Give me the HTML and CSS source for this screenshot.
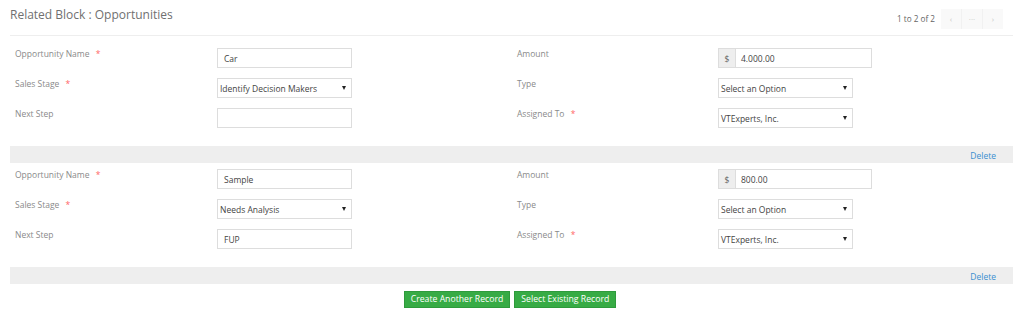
FILE: index.html
```html
<!DOCTYPE html>
<html lang="en">
<head>
    <meta charset="UTF-8">
    <title>Related Block : Opportunities</title>
    <link rel="stylesheet" href="styles.css">
</head>
<body>

    <div class="block">
        <div class="block-header">
            <h3 class="block-title">Related Block : Opportunities</h3>
            <div class="pager">
                <span class="pager-count">1 to 2 of 2</span>
                <div class="pager-btns">
                    <span class="pager-btn">&lsaquo;</span>
                    <span class="pager-btn">&middot;&middot;&middot;</span>
                    <span class="pager-btn">&rsaquo;</span>
                </div>
            </div>
        </div>

        <!-- record 1 -->
        <div class="fields first">
            <div class="label">Opportunity Name <span class="req">*</span></div>
            <div class="field"><div class="input">Car</div></div>
            <div class="label">Amount</div>
            <div class="field">
                <div class="input-group">
                    <span class="addon">$</span>
                    <span class="input-value">4.000.00</span>
                </div>
            </div>

            <div class="label">Sales Stage <span class="req">*</span></div>
            <div class="field"><div class="select"><span>Identify Decision Makers</span><span class="caret"></span></div></div>
            <div class="label">Type</div>
            <div class="field"><div class="select"><span>Select an Option</span><span class="caret"></span></div></div>

            <div class="label">Next Step</div>
            <div class="field"><div class="input"></div></div>
            <div class="label">Assigned To <span class="req">*</span></div>
            <div class="field"><div class="select"><span>VTExperts, Inc.</span><span class="caret"></span></div></div>
        </div>
        <div class="record-bar"><a href="#" class="delete">Delete</a></div>

        <!-- record 2 -->
        <div class="fields">
            <div class="label">Opportunity Name <span class="req">*</span></div>
            <div class="field"><div class="input">Sample</div></div>
            <div class="label">Amount</div>
            <div class="field">
                <div class="input-group">
                    <span class="addon">$</span>
                    <span class="input-value">800.00</span>
                </div>
            </div>

            <div class="label">Sales Stage <span class="req">*</span></div>
            <div class="field"><div class="select"><span>Needs Analysis</span><span class="caret"></span></div></div>
            <div class="label">Type</div>
            <div class="field"><div class="select"><span>Select an Option</span><span class="caret"></span></div></div>

            <div class="label">Next Step</div>
            <div class="field"><div class="input">FUP</div></div>
            <div class="label">Assigned To <span class="req">*</span></div>
            <div class="field"><div class="select"><span>VTExperts, Inc.</span><span class="caret"></span></div></div>
        </div>
        <div class="record-bar"><a href="#" class="delete">Delete</a></div>

        <div class="actions">
            <button class="btn-success">Create Another Record</button>
            <button class="btn-success">Select Existing Record</button>
        </div>
    </div>

</body>
</html>
```

FILE: styles.css
```css
body {
    margin: 0;
    padding: 0 11px 0 10px;
    background-color: #fff;
    font-family: "Open Sans", sans-serif;
}
.block {
    display: flex;
    flex-direction: column;
}
.block-header {
    display: flex;
    justify-content: space-between;
    align-items: center;
    height: 35px;
    padding-right: 10px;
    border-bottom: 1px solid #eeeeee;
}
.block-title {
    margin: 0;
    margin-top: -6px;
    font-size: 12px;
    font-weight: 400;
    color: #707070;
}
.pager {
    display: flex;
    align-items: center;
    gap: 6px;
    margin-top: 2px;
}
.pager-count {
    font-size: 8.2px;
    color: #666;
}
.pager-btns {
    display: flex;
    height: 20px;
}
.pager-btn {
    display: flex;
    align-items: center;
    justify-content: center;
    width: 20px;
    font-size: 8px;
    color: #c8c8c8;
    background-color: #f9f9f9;
    border-right: 1px solid #f1f1f1;
}
.pager-btn:last-child {
    border-right: none;
}
.fields {
    display: grid;
    grid-template-columns: 207px 300px 201px 1fr;
    grid-auto-rows: 20px;
    row-gap: 10px;
    padding: 6px 0 18px;
}
.fields.first {
    padding-top: 12px;
}
.label {
    padding-left: 5px;
    font-size: 8.5px;
    line-height: 12px;
    color: #8a8a8a;
}
.label:nth-child(4n+3) {
    padding-left: 0;
}
.req {
    margin-left: 4px;
    color: #f66;
}
.input,
.select,
.input-group {
    box-sizing: border-box;
    display: flex;
    align-items: center;
    height: 20px;
    border: 1px solid #ddd;
    font-size: 8.5px;
    color: #444;
}
.input {
    width: 135px;
    padding-left: 6px;
}
.select {
    width: 135px;
    padding: 0 5px 0 2px;
    justify-content: space-between;
}
.caret {
    width: 0;
    height: 0;
    border-left: 2.5px solid transparent;
    border-right: 2.5px solid transparent;
    border-top: 4px solid #222;
}
.input-group {
    width: 154px;
}
.addon {
    display: flex;
    align-items: center;
    justify-content: center;
    width: 16px;
    height: 100%;
    background-color: #eee;
    border-right: 1px solid #ddd;
    color: #666;
}
.input-value {
    padding-left: 5px;
}
.record-bar {
    display: flex;
    justify-content: flex-end;
    align-items: center;
    height: 17px;
    padding: 2px 17px 0 0;
    box-sizing: border-box;
    background-color: #eeeeee;
}
.delete {
    font-size: 8.5px;
    color: #3a8fd0;
    text-decoration: none;
}
.actions {
    display: flex;
    justify-content: center;
    gap: 4px;
    margin-top: 7px;
    padding-right: 3px;
}
.btn-success {
    height: 17px;
    padding: 0 6px;
    border: 1px solid #2e9a3c;
    border-radius: 0;
    background-color: #37ab45;
    color: #fff;
    font-family: "Open Sans", sans-serif;
    font-size: 8.7px;
    line-height: 15px;
}
```
